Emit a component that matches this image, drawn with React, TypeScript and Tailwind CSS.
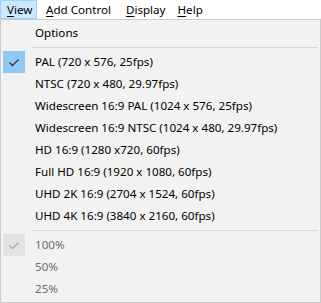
import React from "react";

const Check = ({ color }: { color: string }) => (
  <svg width="22" height="22" viewBox="0 0 22 22">
    <path d="M6.5 11.5 L9.5 14.5 L15.5 8.5" fill="none" stroke={color} strokeWidth="1.3" />
  </svg>
);

type Item = { label: string; checked?: boolean; disabled?: boolean };

const Row = ({ label, checked, disabled }: Item) => (
  <div className="flex h-[22px] items-center">
    <div
      className={
        "ml-[2px] flex h-[22px] w-[22px] items-center justify-center " +
        (checked ? (disabled ? "bg-[#e3e3e3]" : "bg-[#90c8f6]") : "")
      }
    >
      {checked ? <Check color={disabled ? "#a8a8a8" : "#333333"} /> : null}
    </div>
    <span className={"pl-[10px] leading-none " + (disabled ? "text-[#6d6d6d]" : "text-black")}>{label}</span>
  </div>
);

const Sep = () => (
  <div className="h-[7px] pt-[3px] pl-[30px] pr-[2px]">
    <div className="h-px bg-[#d7d7d7]" />
  </div>
);

export default function App() {
  const modes: Item[] = [
    { label: "PAL (720 x 576, 25fps)", checked: true },
    { label: "NTSC (720 x 480, 29.97fps)" },
    { label: "Widescreen 16:9 PAL (1024 x 576, 25fps)" },
    { label: "Widescreen 16:9 NTSC (1024 x 480, 29.97fps)" },
    { label: "HD 16:9 (1280 x720, 60fps)" },
    { label: "Full HD 16:9 (1920 x 1080, 60fps)" },
    { label: "UHD 2K 16:9 (2704 x 1524, 60fps)" },
    { label: "UHD 4K 16:9 (3840 x 2160, 60fps)" },
  ];
  const zooms: Item[] = [
    { label: "100%", checked: true, disabled: true },
    { label: "50%", disabled: true },
    { label: "25%", disabled: true },
  ];
  return (
    <div
      className="h-[303px] w-[321px] bg-white text-[11.6px] text-black"
      style={{ fontFamily: '"Noto Sans", "Segoe UI", sans-serif' }}
    >
      <div className="flex h-[19px] items-center">
        <div className="flex h-[19px] w-[37px] items-center border border-[#99d1ff] bg-[#cce8ff] pl-[6px]">
          <span className="leading-none"><u className="underline-offset-2">V</u>iew</span>
        </div>
        <div className="ml-[9px] leading-none">
          <u className="underline-offset-2">A</u>dd Control
        </div>
        <div className="ml-[15px] leading-none">
          <u className="underline-offset-2">D</u>isplay
        </div>
        <div className="ml-[12px] leading-none">
          <u className="underline-offset-2">H</u>elp
        </div>
      </div>
      <div className="h-[284px] w-[321px] border border-[#cccccc] bg-[#f2f2f2] py-[2px]">
        <div className="flex h-[22px] items-center pl-[34px] leading-none">Options</div>
        <Sep />
        {modes.map((m) => (
          <Row key={m.label} {...m} />
        ))}
        <Sep />
        {zooms.map((m) => (
          <Row key={m.label} {...m} />
        ))}
      </div>
    </div>
  );
}
